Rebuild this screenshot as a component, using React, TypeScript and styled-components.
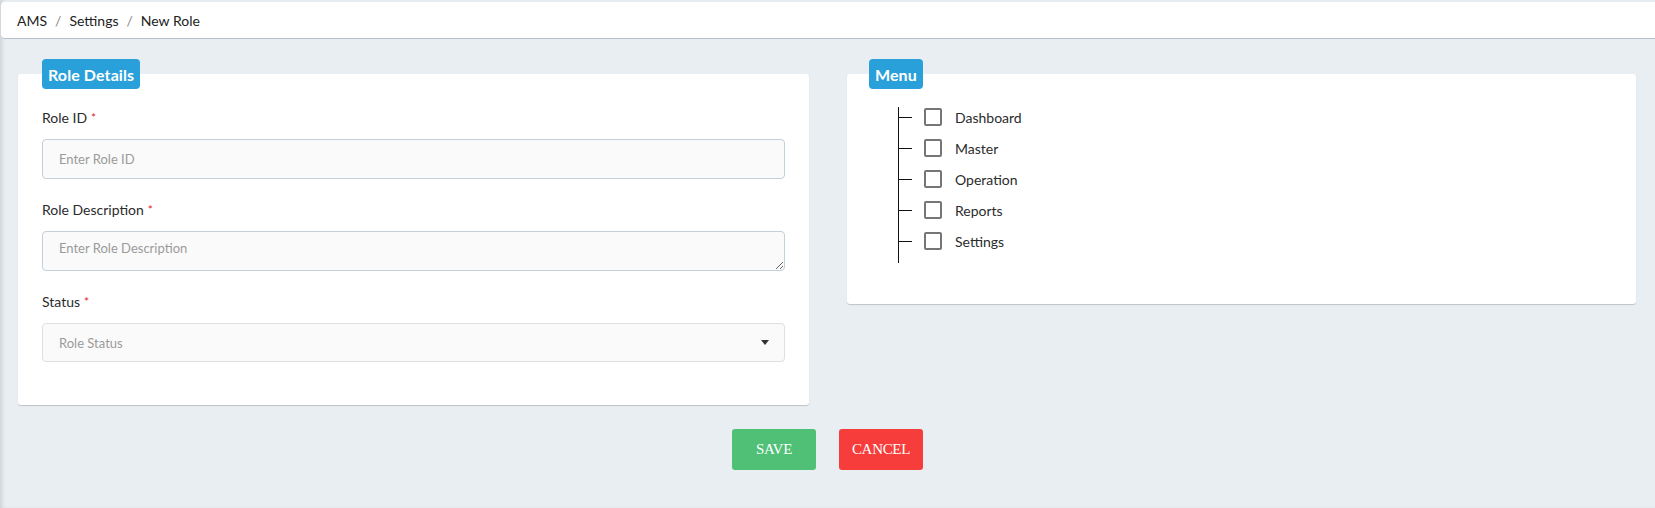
import styled, { createGlobalStyle } from "styled-components"

const GlobalStyle = createGlobalStyle`
	html, body {
		margin: 0;
		padding: 0;
	}
	body {
		background: #e9eef3;
		font-family: Lato, "Open Sans", sans-serif;
		color: #2b2b2b;
	}
`

const Page = styled.div`
	min-height: 100vh;
	box-shadow: inset 4px 0 4px -2px rgba(0, 0, 0, 0.12);
	padding-top: 2px;
	box-sizing: border-box;
`

const Header = styled.div`
	display: flex;
	align-items: center;
	gap: 8px;
	height: 36px;
	margin-left: 1px;
	padding-left: 16px;
	background: #ffffff;
	border-bottom: 1px solid #b7c1cb;
	border-radius: 4px 0 0 4px;
	font-size: 14px;
	color: #222;
`

const Crumb = styled.span`
	color: #222;
`

const Sep = styled.span`
	color: #888;
`

const Columns = styled.div`
	display: grid;
	grid-template-columns: 791px 789px;
	column-gap: 38px;
	align-items: start;
	padding: 35px 19px 0 18px;
`

const Card = styled.section<{ $pad: string }>`
	position: relative;
	background: #ffffff;
	border-radius: 3px;
	box-shadow: 0 1px 1px rgba(0, 0, 0, 0.18);
	padding: ${p => p.$pad};
`

const Badge = styled.div<{ $left: number }>`
	position: absolute;
	top: -15px;
	left: ${p => p.$left}px;
	height: 30px;
	display: flex;
	align-items: center;
	padding: 0 6px;
	background: #29a0da;
	border-radius: 4px;
	color: #ffffff;
	font-weight: 700;
	font-size: 16px;
	letter-spacing: 0.1px;
`

const Field = styled.div`
	display: flex;
	flex-direction: column;
	margin-bottom: 21px;
	&:last-child {
		margin-bottom: 0;
	}
`

const Label = styled.label`
	font-size: 14px;
	line-height: 20px;
	margin-bottom: 11px;
	color: #2b2b2b;
`

const Req = styled.span`
	color: #e3262b;
	margin-left: 4px;
	font-size: 12px;
	vertical-align: top;
`

const inputBase = `
	box-sizing: border-box;
	width: 100%;
	height: 40px;
	background: #fafafa;
	border-radius: 4px;
	font-family: Lato, "Open Sans", sans-serif;
	font-size: 13px;
	color: #333;
	padding: 0 16px;
	outline: none;
	&::placeholder {
		color: #9a9a9a;
	}
`

const TextInput = styled.input`
	${inputBase}
	border: 1px solid #c3cfd9;
`

const TextArea = styled.textarea`
	${inputBase}
	border: 1px solid #c3cfd9;
	padding-top: 8px;
	min-height: 40px;
	resize: vertical;
	display: block;
`

const SelectWrap = styled.div`
	position: relative;
`

const Select = styled.select`
	${inputBase}
	height: 39px;
	border: 1px solid #dcdfe3;
	appearance: none;
	color: #9a9a9a;
`

const Caret = styled.span`
	position: absolute;
	right: 16px;
	top: 17px;
	width: 0;
	height: 0;
	border-left: 4px solid transparent;
	border-right: 4px solid transparent;
	border-top: 5px solid #333;
	pointer-events: none;
`

const Tree = styled.ul`
	list-style: none;
	margin: 0 0 0 51px;
	padding: 0 0 12px 0;
	border-left: 1px solid #111;
	display: flex;
	flex-direction: column;
	gap: 11px;
`

const TreeItem = styled.li`
	display: flex;
	align-items: center;
	height: 20px;
	font-size: 14px;
	color: #2b2b2b;

	&::before {
		content: "";
		width: 13px;
		height: 1px;
		background: #111;
		margin-right: 12px;
	}
`

const Check = styled.input`
	appearance: none;
	box-sizing: border-box;
	width: 18px;
	height: 18px;
	margin: 0 13px 0 0;
	border: 2px solid #767676;
	border-radius: 2px;
	background: #fff;
`

const Actions = styled.div`
	display: flex;
	justify-content: center;
	gap: 23px;
	padding-top: 24px;
`

const Button = styled.button<{ $color: string }>`
	width: 84px;
	height: 41px;
	border: none;
	border-radius: 3px;
	background: ${p => p.$color};
	color: #ffffff;
	font-family: "Liberation Serif", serif;
	font-size: 15px;
	letter-spacing: -0.3px;
	cursor: pointer;
`

const menuItems = ["Dashboard", "Master", "Operation", "Reports", "Settings"]

export default function App() {
	return (
		<>
			<GlobalStyle />
			<Page>
				<Header>
					<Crumb>AMS</Crumb>
					<Sep>/</Sep>
					<Crumb>Settings</Crumb>
					<Sep>/</Sep>
					<Crumb>New Role</Crumb>
				</Header>
				<Columns>
					<Card $pad="34px 24px 43px">
						<Badge $left={24}>Role Details</Badge>
						<Field>
							<Label>Role ID<Req>*</Req></Label>
							<TextInput placeholder="Enter Role ID" />
						</Field>
						<Field>
							<Label>Role Description<Req>*</Req></Label>
							<TextArea placeholder="Enter Role Description" />
						</Field>
						<Field>
							<Label>Status<Req>*</Req></Label>
							<SelectWrap>
								<Select defaultValue="">
									<option value="" disabled>Role Status</option>
									<option value="active">Active</option>
									<option value="inactive">Inactive</option>
								</Select>
								<Caret />
							</SelectWrap>
						</Field>
					</Card>
					<Card $pad="33px 24px 41px 0">
						<Badge $left={22}>Menu</Badge>
						<Tree>
							{menuItems.map(item => (
								<TreeItem key={item}>
									<Check type="checkbox" />
									{item}
								</TreeItem>
							))}
						</Tree>
					</Card>
				</Columns>
				<Actions>
					<Button $color="#4fc076">SAVE</Button>
					<Button $color="#f73c3c">CANCEL</Button>
				</Actions>
			</Page>
		</>
	)
}
